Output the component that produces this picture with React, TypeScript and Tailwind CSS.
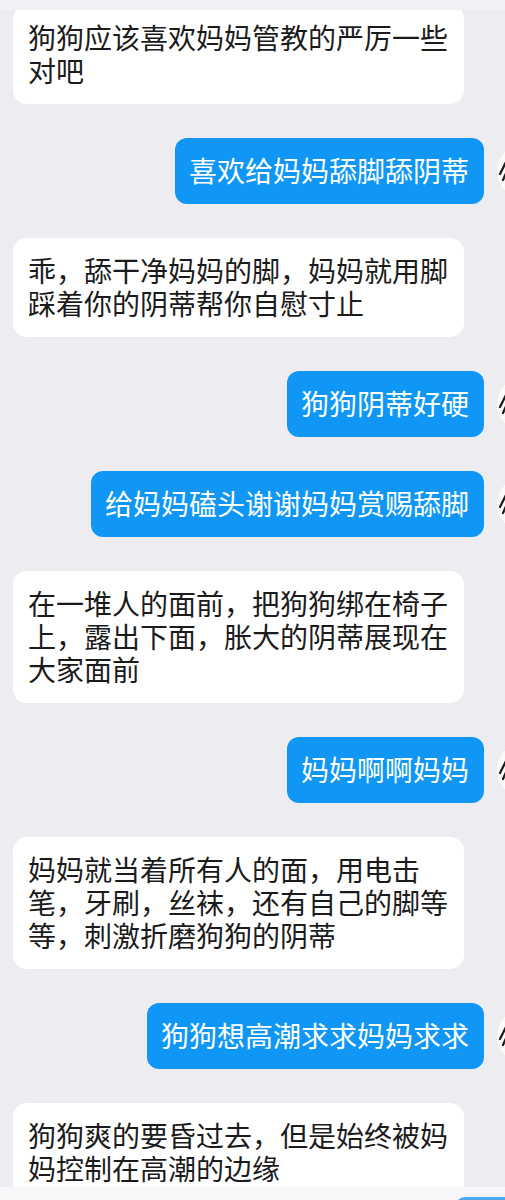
const MESSAGES: { side: "left" | "right"; lines: string[] }[] = [
  { side: "left", lines: ["狗狗应该喜欢妈妈管教的严厉一些", "对吧"] },
  { side: "right", lines: ["喜欢给妈妈舔脚舔阴蒂"] },
  { side: "left", lines: ["乖，舔干净妈妈的脚，妈妈就用脚", "踩着你的阴蒂帮你自慰寸止"] },
  { side: "right", lines: ["狗狗阴蒂好硬"] },
  { side: "right", lines: ["给妈妈磕头谢谢妈妈赏赐舔脚"] },
  { side: "left", lines: ["在一堆人的面前，把狗狗绑在椅子", "上，露出下面，胀大的阴蒂展现在", "大家面前"] },
  { side: "right", lines: ["妈妈啊啊妈妈"] },
  { side: "left", lines: ["妈妈就当着所有人的面，用电击", "笔，牙刷，丝袜，还有自己的脚等", "等，刺激折磨狗狗的阴蒂"] },
  { side: "right", lines: ["狗狗想高潮求求妈妈求求"] },
  { side: "left", lines: ["狗狗爽的要昏过去，但是始终被妈", "妈控制在高潮的边缘"] },
];

function Avatar() {
  return (
    <svg width="56" height="56" viewBox="0 0 56 56" className="shrink-0">
      <circle cx="28" cy="28" r="28" fill="#fafafa" />
      <path d="M11 15 L3 31" stroke="#1a1a1a" strokeWidth="2.2" strokeLinecap="round" />
      <path d="M14 19 L6 37" stroke="#1a1a1a" strokeWidth="2.2" strokeLinecap="round" />
      <path d="M18 21 L10 39" stroke="#1a1a1a" strokeWidth="2" strokeLinecap="round" />
      <path d="M8 34 Q10 40 14 42" stroke="#444" strokeWidth="1.6" fill="none" />
    </svg>
  );
}

function Bubble({ side, lines }: { side: "left" | "right"; lines: string[] }) {
  const text = lines.map((l, i) => (
    <span key={i} className="block whitespace-nowrap">
      {l}
    </span>
  ));

  if (side === "left") {
    return (
      <div className="flex pl-[13px]">
        <div className="w-[451px] rounded-[14px] bg-white px-[15px] pt-4 pb-[17px] text-[28px] leading-[33px] text-[#1b1b1b]">
          {text}
        </div>
      </div>
    );
  }

  return (
    <div className="flex items-center justify-end gap-[13px] mr-[-48px]">
      <div className="rounded-[12px] bg-[#1097f6] pl-[14px] pr-[15px] pt-4 pb-[17px] text-[28px] leading-[33px] text-white">
        {text}
      </div>
      <Avatar />
    </div>
  );
}

export default function App() {
  return (
    <div className="w-[505px] h-[1200px] overflow-hidden bg-[#ededf1] flex flex-col font-['Noto_Sans_CJK_SC','Noto_Sans',sans-serif]">
      {/* top bar edge */}
      <div className="h-[10px] shrink-0 bg-[#f2f2f6] relative z-10" />

      {/* messages */}
      <div className="h-[1177px] shrink-0 overflow-hidden flex flex-col gap-[34px]">
        {MESSAGES.map((m, i) => (
          <div key={i} className={i === 0 ? "-mt-[5px]" : ""}>
            <Bubble side={m.side} lines={m.lines} />
          </div>
        ))}
      </div>

      {/* input bar */}
      <div className="flex-1 bg-[#f7f7f9] flex justify-end pt-[10px]">
        <div className="w-[60px] h-[20px] rounded-tl-[10px] bg-[#4aa8f7] mr-[-10px]" />
      </div>
    </div>
  );
}
